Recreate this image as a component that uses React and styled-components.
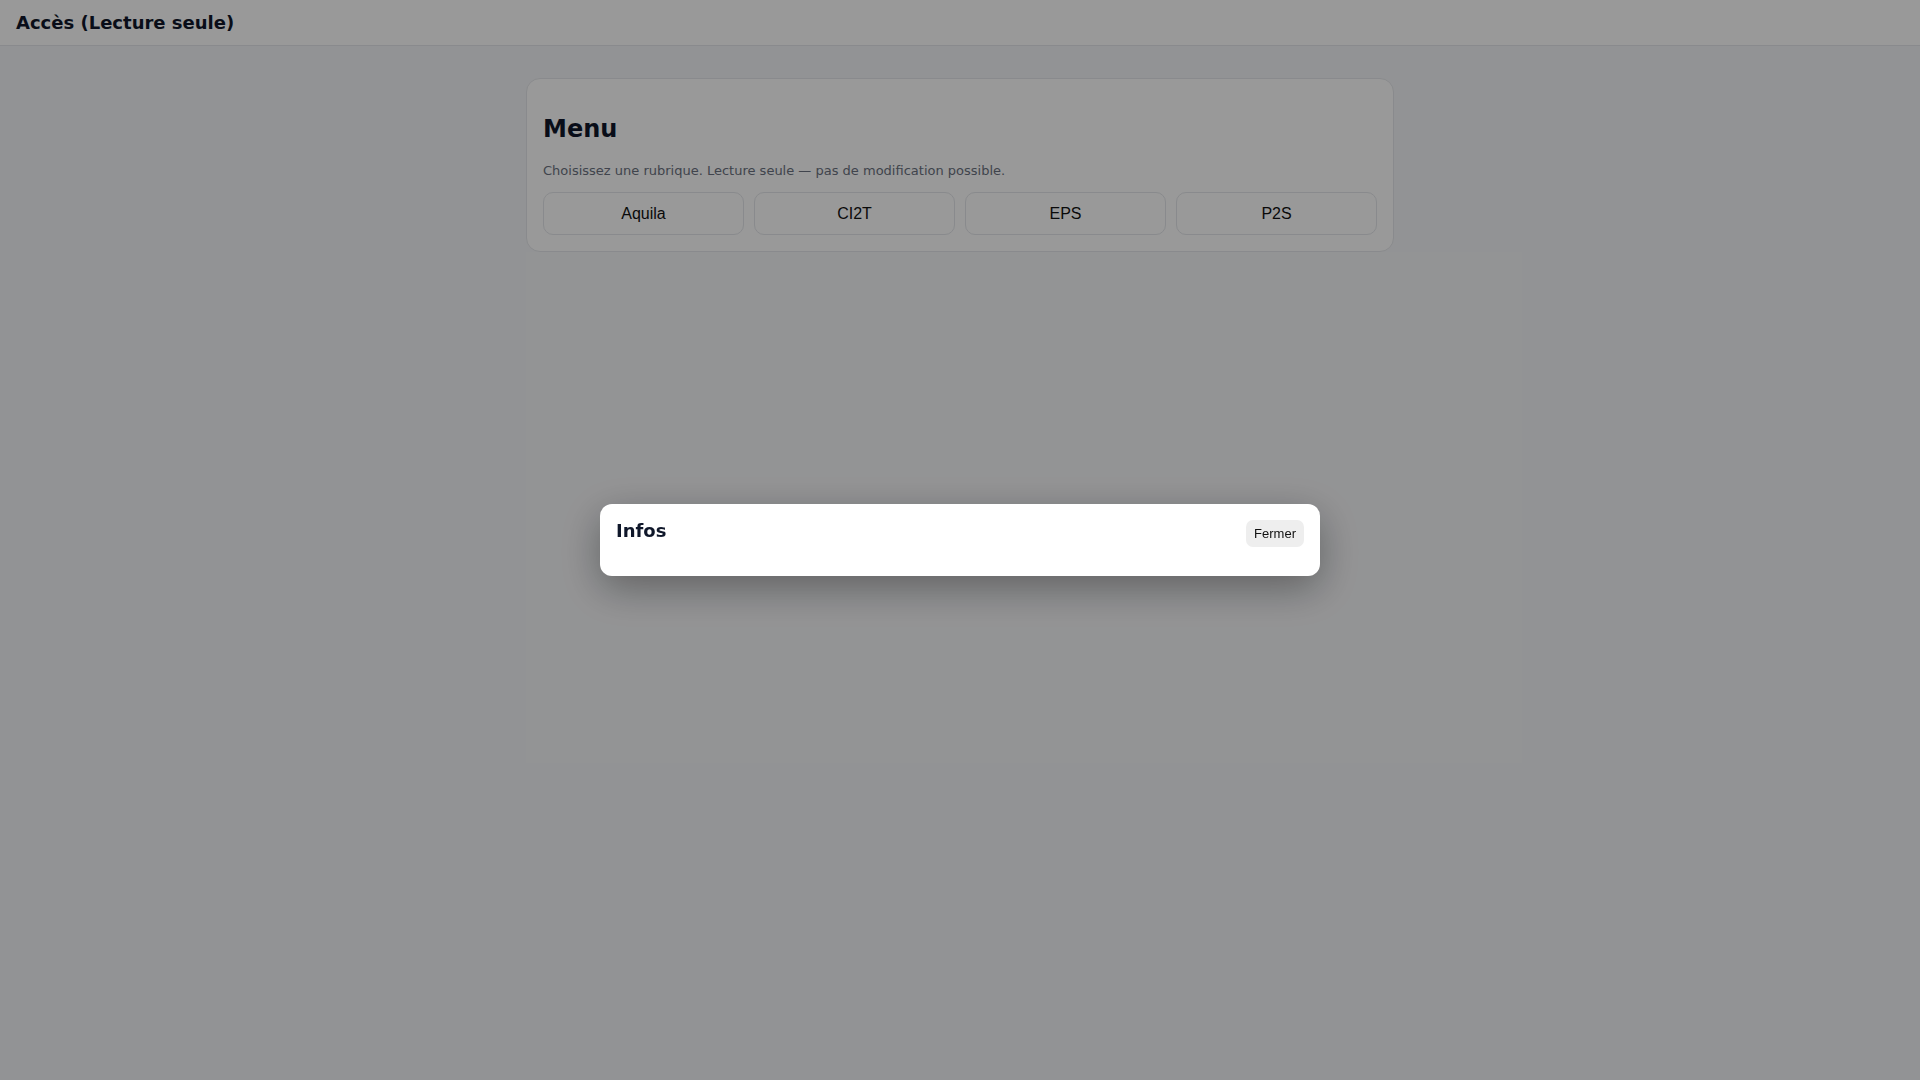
import React from 'react';
import styled, { createGlobalStyle } from 'styled-components';

const GlobalStyle = createGlobalStyle`
  html, body {
    margin: 0;
    padding: 0;
    background: #f4f5f8;
    font-family: "DejaVu Sans", "Noto Sans", sans-serif;
    color: #0f172a;
  }
  * { box-sizing: border-box; }
`;

const TopBar = styled.header`
  height: 46px;
  padding: 12px 16px;
  background: #ffffff;
  border-bottom: 1px solid #e5e7eb;
  font-size: 18px;
  line-height: 21px;
  font-weight: 700;
  color: #0f172a;
`;

const Main = styled.main`
  width: 868px;
  margin: 32px auto 0;
`;

const Card = styled.section`
  background: #ffffff;
  border: 1px solid #e5e7eb;
  border-radius: 14px;
  padding: 16px;
`;

const CardTitle = styled.h2`
  margin: 20px 0 0;
  font-size: 24px;
  line-height: 28px;
  font-weight: 700;
  color: #0f172a;
`;

const Hint = styled.p`
  margin: 18px 0 11px;
  font-size: 13px;
  line-height: 20px;
  color: #6b7280;
`;

const ButtonRow = styled.div`
  display: flex;
  gap: 10px;
`;

const SectionButton = styled.button`
  flex: 1;
  height: 43px;
  background: #ffffff;
  border: 1px solid #e5e7eb;
  border-radius: 10px;
  font-family: "Liberation Sans", Arial, sans-serif;
  font-size: 16px;
  color: #111111;
  cursor: pointer;
`;

const Placeholder = styled.div`
  width: 996px;
  height: 511px;
  background: #f6f7f9;
`;

const Overlay = styled.div`
  position: fixed;
  inset: 0;
  background: rgba(0, 0, 0, 0.4);
  display: flex;
  align-items: center;
  justify-content: center;
`;

const Modal = styled.div`
  width: 720px;
  background: #ffffff;
  border-radius: 12px;
  padding: 16px;
  box-shadow: 0 12px 40px rgba(0, 0, 0, 0.35);
`;

const ModalHead = styled.div`
  display: flex;
  justify-content: space-between;
  align-items: flex-start;
  margin-bottom: 13px;
`;

const ModalTitle = styled.h3`
  margin: 0;
  font-size: 18px;
  line-height: 21px;
  font-weight: 700;
  color: #0f172a;
`;

const CloseButton = styled.button`
  height: 27px;
  padding: 0 8px;
  border: none;
  border-radius: 7px;
  background: #eeeeee;
  font-family: "Liberation Sans", Arial, sans-serif;
  font-size: 13px;
  color: #111111;
  cursor: pointer;
`;

const sections = ['Aquila', 'CI2T', 'EPS', 'P2S'];

export default function App() {
  return (
    <>
      <GlobalStyle />
      <TopBar>Accès (Lecture seule)</TopBar>
      <Main>
        <Card>
          <CardTitle>Menu</CardTitle>
          <Hint>Choisissez une rubrique. Lecture seule — pas de modification possible.</Hint>
          <ButtonRow>
            {sections.map(s => (
              <SectionButton key={s}>{s}</SectionButton>
            ))}
          </ButtonRow>
        </Card>
        <Placeholder />
      </Main>
      <Overlay>
        <Modal>
          <ModalHead>
            <ModalTitle>Infos</ModalTitle>
            <CloseButton>Fermer</CloseButton>
          </ModalHead>
        </Modal>
      </Overlay>
    </>
  );
}
